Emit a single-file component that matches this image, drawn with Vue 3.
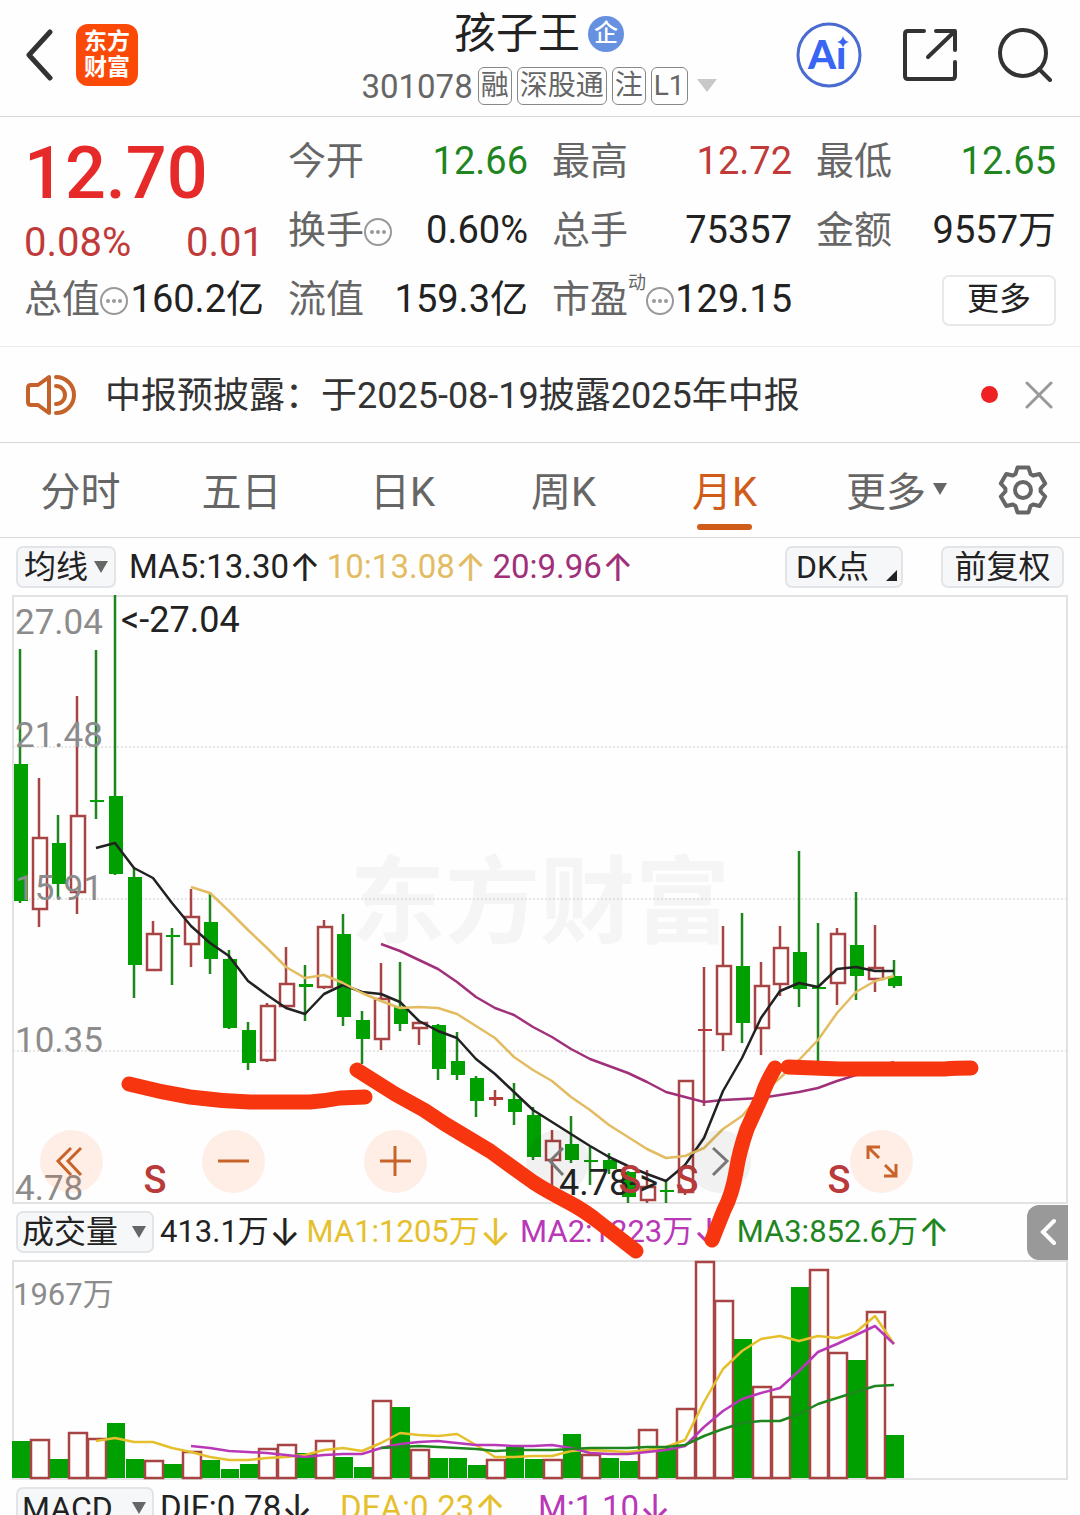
<template>
  <div class="stock-page">
    <header class="top-bar">
      <div class="top-left">
        <button class="icon-btn" aria-label="返回">
          <svg width="28" height="56" viewBox="4 0 28 56">
            <path d="M28 5 L7 28 L28 51" class="ico-dark thick" />
          </svg>
        </button>
        <div class="logo"><span>东方</span><span>财富</span></div>
      </div>

      <div class="title">
        <h1>孩子王<span class="badge">企</span></h1>
        <div class="code-line">
          <span class="code">301078</span>
          <span v-for="tag in tags" :key="tag" class="tag">{{ tag }}</span>
          <svg class="caret" width="20" height="14" viewBox="0 0 20 14"><path d="M0 0 H20 L10 13 Z" fill="#c8c8c8" /></svg>
        </div>
      </div>

      <div class="top-right">
        <button class="icon-btn" aria-label="Ai">
          <svg width="66" height="66" viewBox="0 0 66 66">
            <circle cx="33" cy="33" r="31" fill="#fff" stroke="#4a6bd0" stroke-width="3" />
            <text x="12" y="47" class="ai-text">Ai</text>
            <rect x="40" y="13" width="14" height="13" fill="#fff" />
            <path d="M47 14 Q48 19 53 20 Q48 21 47 26 Q46 21 41 20 Q46 19 47 14 Z" fill="#3866f2" />
          </svg>
        </button>
        <button class="icon-btn" aria-label="分享">
          <svg width="54" height="54" viewBox="0 0 54 54">
            <path d="M21 3 H5 Q2 3 2 6 V48 Q2 51 5 51 H49 Q52 51 52 48 V34 M33 3 H52 V22 M51 4 L25 29" class="ico-dark" />
          </svg>
        </button>
        <button class="icon-btn" aria-label="搜索">
          <svg width="54" height="54" viewBox="0 0 54 54">
            <circle cx="25" cy="25" r="23" class="ico-dark" />
            <path d="M41 41 L52 52" class="ico-dark" />
          </svg>
        </button>
      </div>
    </header>

    <section class="quote">
      <div class="price-box">
        <div class="price">12.70</div>
        <div class="change"><span>0.08%</span><span>0.01</span></div>
      </div>
      <div v-for="q in quotes" :key="q.label" class="cell">
        <span class="label">{{ q.label }}</span>
        <sup v-if="q.sup">{{ q.sup }}</sup>
        <svg v-if="q.tip" class="tip" width="28" height="28" viewBox="0 0 28 28">
          <circle cx="14" cy="14" r="13" fill="none" stroke="#999" stroke-width="2" />
          <circle cx="8" cy="14" r="2" fill="#999" />
          <circle cx="14" cy="14" r="2" fill="#999" />
          <circle cx="20" cy="14" r="2" fill="#999" />
        </svg>
        <span class="value" :class="q.color">{{ q.value }}</span>
      </div>
      <div class="cell more-cell"><button class="more-btn">更多</button></div>
    </section>

    <section class="notice">
      <svg width="50" height="42" viewBox="0 0 50 42" class="ico-orange">
        <path d="M23 3 V39 L12 31 H5 Q2 31 2 28 V14 Q2 11 5 11 H12 Z" />
        <path d="M30 3 A18 18 0 0 1 30 39" />
        <path d="M30 12 A9 9 0 0 1 30 30" />
      </svg>
      <a href="#" class="notice-text">中报预披露：于2025-08-19披露2025年中报</a>
      <span class="dot"></span>
      <button class="icon-btn" aria-label="关闭">
        <svg width="28" height="28" viewBox="0 0 28 28"><path d="M2 2 L26 26 M26 2 L2 26" stroke="#999" stroke-width="3" stroke-linecap="round" /></svg>
      </button>
    </section>

    <nav class="tabs">
      <button v-for="t in tabs" :key="t" class="tab" :class="{ active: t === current }" @click="current = t">{{ t }}</button>
      <button class="tab tab-more">更多<svg width="14" height="12" viewBox="0 0 14 12"><path d="M0 0 H14 L7 12 Z" fill="#666" /></svg></button>
      <button class="icon-btn" aria-label="设置">
        <svg width="50" height="50" viewBox="-25 -25 50 50" class="gear">
          <path :d="gear" />
          <circle r="8" />
        </svg>
      </button>
    </nav>

    <main class="charts">
      <div class="ma-row">
        <button class="chip">均线<svg width="14" height="12" viewBox="0 0 14 12"><path d="M0 0 H14 L7 12 Z" fill="#666" /></svg></button>
        <span class="ma">MA5:13.30<i>↑</i></span>
        <span class="ma gold">10:13.08<i>↑</i></span>
        <span class="ma purple">20:9.96<i>↑</i></span>
        <button class="chip dk">DK点<svg width="11" height="11" viewBox="0 0 11 11"><path d="M11 0 V11 H0 Z" fill="#222" /></svg></button>
        <button class="chip fq">前复权</button>
      </div>

      <div class="kline">
        <svg viewBox="0 595 1080 609" class="chart">
          <text x="350" y="936" class="watermark">东方财富</text>
          <path v-for="y in [747, 899, 1051]" :key="y" :d="`M13 ${y} H1067`" class="grid-line" />
          <rect x="13" y="596" width="1054" height="607" class="frame" />
          <g v-for="(c, i) in candles" :key="i" :class="c[0] === 'g' ? 'down' : 'up'">
            <path :d="`M${cx(i)} ${c[1]} V${c[2]} M${cx(i)} ${c[3]} V${c[4]}`" />
            <rect :x="cx(i) - 6" :y="c[2]" width="14" :height="c[3] - c[2]" :class="{ flat: c[3] - c[2] < 4 }" />
          </g>
          <polyline :points="line(ma20, 19)" stroke="#a0307a" class="ma-line" />
          <polyline :points="line(ma5, 4)" stroke="#222" class="ma-line" />
          <polyline :points="line(ma10, 9)" stroke="#e3bc62" class="ma-line" />
          <text v-for="a in axis" :key="a[0]" x="15" :y="a[1]" class="axis">{{ a[0] }}</text>
          <text x="121" y="632" class="mark">&lt;-27.04</text>
          <text x="559" y="1195" class="mark">4.78-&gt;</text>
          <text v-for="x in [155, 630, 687, 839]" :key="x" :x="x" y="1193" class="sell">S</text>
        </svg>
        <div class="tools">
          <button class="tool" aria-label="最左">
            <svg viewBox="0 0 63 63"><path d="M31 18 L18 31 L31 45 M41 18 L28 31 L41 45" /></svg>
          </button>
          <button class="tool" aria-label="缩小">
            <svg viewBox="0 0 63 63"><path d="M16 31 H47" /></svg>
          </button>
          <button class="tool" aria-label="放大">
            <svg viewBox="0 0 63 63"><path d="M16 31 H47 M31 16 V46" /></svg>
          </button>
          <button class="tool gray" aria-label="左移">
            <svg viewBox="0 0 63 63"><path d="M37 18 L24 31 L37 45" /></svg>
          </button>
          <button class="tool gray" aria-label="右移">
            <svg viewBox="0 0 63 63"><path d="M25 18 L39 31 L25 45" /></svg>
          </button>
          <button class="tool" aria-label="全屏">
            <svg viewBox="0 0 63 63"><path d="M30 17 H18 V29 M18 17 L29 28 M46 34 V46 H34 M46 46 L35 35" /></svg>
          </button>
        </div>
      </div>

      <div class="sub-row">
        <button class="chip">成交量<svg width="14" height="12" viewBox="0 0 14 12"><path d="M0 0 H14 L7 12 Z" fill="#666" /></svg></button>
        <span class="ind">413.1万<i>↓</i></span>
        <span class="ind yellow">MA1:1205万<i>↓</i></span>
        <span class="ind violet">MA2:1223万<i>↓</i></span>
        <span class="ind green">MA3:852.6万<i>↑</i></span>
        <button class="side-btn" aria-label="展开">
          <svg width="16" height="28" viewBox="0 0 16 28"><path d="M14 3 L3 14 L14 25" /></svg>
        </button>
      </div>

      <svg viewBox="0 1260 1080 220" class="chart">
        <rect x="13" y="1261" width="1054" height="218" class="frame" />
        <text x="13" y="1305" class="axis small">1967万</text>
        <g v-for="(v, i) in volumes" :key="i" :class="v[0] === 'g' ? 'down' : 'up'">
          <rect :x="12 + i * 19" :y="v[1]" width="18" :height="1478 - v[1]" />
        </g>
        <polyline :points="line(vol5, 4)" stroke="#e6c02c" class="ma-line" />
        <polyline :points="line(vol10, 9)" stroke="#b838b8" class="ma-line" />
        <polyline :points="line(vol20, 19)" stroke="#1f861f" class="ma-line" />
      </svg>

      <div class="sub-row macd">
        <button class="chip">MACD<svg width="14" height="12" viewBox="0 0 14 12"><path d="M0 0 H14 L7 12 Z" fill="#666" /></svg></button>
        <span class="ind">DIF:0.78<i>↓</i></span>
        <span class="ind yellow">DEA:0.23<i>↑</i></span>
        <span class="ind violet">M:1.10<i>↓</i></span>
      </div>

      <!-- 手绘标注 -->
      <svg viewBox="0 538 1080 977" class="drawing">
        <path d="M129 1084 Q160 1092 190 1097 Q220 1101 250 1102 H310 Q325 1101 340 1098 L365 1097" />
        <path d="M357 1070 L395 1094 L424 1110 L445 1124 L490 1151 L533 1182 Q545 1190 570 1203 Q585 1211 600 1223 L636 1251" />
        <path d="M775 1068 Q765 1085 762 1096 L747 1129 Q739 1152 736 1172 Q732 1195 724 1210 L712 1240" />
        <path d="M788 1067 L840 1069 H945 Q955 1068 971 1068" />
      </svg>
    </main>
  </div>
</template>

<script setup>
import { ref } from 'vue'

const tags = ['融', '深股通', '注', 'L1']
const tabs = ['分时', '五日', '日K', '周K', '月K']
const current = ref('月K')

const quotes = [
  { label: '今开', value: '12.66', color: 'green' },
  { label: '最高', value: '12.72', color: 'red' },
  { label: '最低', value: '12.65', color: 'green' },
  { label: '换手', value: '0.60%', tip: true },
  { label: '总手', value: '75357' },
  { label: '金额', value: '9557万' },
  { label: '总值', value: '160.2亿', tip: true },
  { label: '流值', value: '159.3亿' },
  { label: '市盈', value: '129.15', sup: '动', tip: true },
]

const gear = 'M-7.5 -16 L-5.5 -22.5 H5.5 L7.5 -16 L10.1 -14.5 L16.7 -16 L22.2 -6.5 L17.6 -1.5 V1.5 L22.2 6.5 L16.7 16 L10.1 14.5 L7.5 16 L5.5 22.5 H-5.5 L-7.5 16 L-10.1 14.5 L-16.7 16 L-22.2 6.5 L-17.6 1.5 V-1.5 L-22.2 -6.5 L-16.7 -16 L-10.1 -14.5 Z'

const axis = [['27.04', 634], ['21.48', 747], ['15.91', 900], ['10.35', 1052], ['4.78', 1200]]

// [颜色, 最高, 实体上沿, 实体下沿, 最低]
const candles = [
  ['g', 649, 764, 901, 903], ['r', 778, 838, 909, 927], ['g', 815, 843, 884, 898],
  ['r', 696, 816, 892, 914], ['g', 650, 800, 802, 819], ['g', 595, 796, 874, 875],
  ['g', 868, 877, 965, 998], ['r', 921, 934, 970, 971], ['g', 928, 935, 937, 985],
  ['r', 889, 917, 944, 967], ['g', 892, 922, 959, 974], ['g', 950, 959, 1028, 1029],
  ['g', 1022, 1030, 1063, 1070], ['r', 1003, 1006, 1060, 1062], ['r', 947, 984, 1006, 1007],
  ['g', 965, 984, 987, 1021], ['r', 920, 927, 987, 989], ['g', 914, 934, 1017, 1026],
  ['g', 1011, 1020, 1039, 1064], ['r', 963, 999, 1039, 1050], ['g', 962, 1007, 1024, 1031],
  ['r', 1022, 1023, 1028, 1045], ['g', 1024, 1025, 1069, 1080], ['g', 1032, 1061, 1075, 1080],
  ['g', 1076, 1078, 1101, 1117], ['r', 1090, 1097, 1100, 1106], ['g', 1083, 1099, 1112, 1125],
  ['g', 1107, 1115, 1157, 1160], ['r', 1130, 1141, 1160, 1187], ['g', 1116, 1144, 1160, 1163],
  ['g', 1147, 1160, 1162, 1185], ['g', 1153, 1160, 1169, 1174], ['g', 1171, 1172, 1197, 1203],
  ['r', 1170, 1187, 1200, 1203], ['g', 1180, 1190, 1192, 1203], ['r', 1080, 1081, 1192, 1195],
  ['r', 967, 1029, 1031, 1106], ['r', 926, 966, 1034, 1051], ['g', 913, 966, 1023, 1043],
  ['r', 962, 986, 1028, 1055], ['r', 926, 948, 984, 996], ['g', 851, 952, 989, 1007],
  ['g', 923, 987, 989, 1062], ['r', 928, 934, 983, 1005], ['g', 892, 945, 976, 1000],
  ['r', 925, 968, 979, 992], ['g', 960, 976, 986, 988],
]

const ma5 = [848, 843, 868, 878, 903, 926, 943, 956, 981, 995, 1008, 1014, 994, 985, 992, 994, 1002, 1021, 1031, 1038, 1059, 1074, 1092, 1110, 1122, 1134, 1146, 1157, 1166, 1174, 1181, 1165, 1138, 1091, 1058, 1018, 991, 983, 987, 969, 967, 971, 971]
const ma10 = [887, 893, 911, 930, 948, 967, 978, 975, 983, 993, 1001, 1008, 1007, 1008, 1014, 1026, 1038, 1057, 1070, 1081, 1097, 1110, 1125, 1137, 1149, 1158, 1156, 1148, 1129, 1116, 1094, 1078, 1060, 1040, 1013, 992, 981, 976]
const ma20 = [944, 951, 960, 969, 982, 997, 1008, 1015, 1027, 1037, 1049, 1059, 1066, 1073, 1082, 1092, 1097, 1102, 1100, 1099, 1098, 1095, 1092, 1088, 1081, 1075, 1068, 1062]

const volumes = [
  ['g', 1441], ['r', 1440], ['g', 1459], ['r', 1433], ['r', 1439], ['g', 1423], ['g', 1459], ['r', 1461],
  ['g', 1464], ['r', 1452], ['g', 1460], ['g', 1469], ['g', 1464], ['r', 1449], ['r', 1445], ['g', 1453],
  ['r', 1441], ['g', 1457], ['g', 1467], ['r', 1401], ['g', 1407], ['r', 1450], ['g', 1458], ['g', 1458],
  ['g', 1465], ['r', 1460], ['g', 1447], ['g', 1459], ['r', 1460], ['g', 1434], ['r', 1455], ['g', 1458],
  ['g', 1461], ['r', 1430], ['g', 1448], ['r', 1409], ['r', 1262], ['r', 1301], ['g', 1339], ['r', 1387],
  ['r', 1397], ['g', 1287], ['r', 1270], ['r', 1353], ['g', 1360], ['r', 1312], ['g', 1435],
]
const vol5 = [1441, 1438, 1442, 1442, 1448, 1452, 1457, 1460, 1460, 1458, 1457, 1455, 1450, 1448, 1451, 1443, 1433, 1435, 1436, 1434, 1445, 1457, 1457, 1456, 1456, 1451, 1450, 1451, 1452, 1450, 1447, 1440, 1402, 1369, 1351, 1339, 1336, 1341, 1336, 1338, 1332, 1316, 1344]
const vol10 = [1446, 1448, 1451, 1452, 1453, 1455, 1457, 1455, 1454, 1454, 1448, 1444, 1442, 1441, 1443, 1445, 1445, 1446, 1446, 1445, 1448, 1453, 1454, 1454, 1452, 1450, 1446, 1427, 1411, 1399, 1393, 1388, 1371, 1352, 1344, 1335, 1326, 1344]
const vol20 = [1448, 1447, 1446, 1447, 1448, 1449, 1451, 1450, 1450, 1450, 1449, 1448, 1448, 1448, 1447, 1447, 1445, 1436, 1429, 1423, 1421, 1421, 1414, 1404, 1398, 1392, 1386, 1385]

const cx = (i) => 20 + i * 19

const line = (list, start) => list.map((y, i) => `${cx(i + start)},${y}`).join(' ')
</script>

<style>
body {
  background: #fff;
}
</style>

<style scoped>
.stock-page {
  height: 100vh;
  overflow: hidden;
  background: #fefefe;
  color: #222;
  font-family: Roboto, "Noto Sans CJK SC", sans-serif;
  white-space: nowrap;
}

button {
  font-family: inherit;
  color: inherit;
  cursor: pointer;
}

.icon-btn {
  display: flex;
  align-items: center;
  justify-content: center;
  padding: 0;
  border: none;
  background: none;
}

.ico-dark {
  fill: none;
  stroke: #333;
  stroke-width: 4;
  stroke-linecap: round;
  stroke-linejoin: round;
}
.ico-dark.thick {
  stroke-width: 5;
}

.top-bar {
  display: grid;
  grid-template-columns: 1fr auto 1fr;
  height: 116px;
  padding: 0 28px 0 26px;
  border-bottom: 1px solid #d8d8d8;
}

.top-left,
.top-right {
  display: flex;
  align-items: center;
  height: 110px;
}
.top-left {
  gap: 22px;
}
.top-right {
  justify-content: flex-end;
  gap: 41px;
}

.logo {
  display: flex;
  flex-direction: column;
  justify-content: center;
  align-items: center;
  width: 62px;
  height: 62px;
  border-radius: 12px;
  background: #fb4a08;
  color: #fff;
  font-size: 23px;
  font-weight: 700;
  line-height: 26px;
}

.title {
  display: flex;
  flex-direction: column;
  align-items: center;
}
.title h1 {
  display: flex;
  align-items: center;
  gap: 8px;
  margin: 8px 0 0;
  font-size: 42px;
  font-weight: 400;
  line-height: 52px;
}
.badge {
  width: 36px;
  height: 36px;
  border-radius: 50%;
  background: #6690e0;
  color: #fff;
  font-size: 24px;
  font-weight: 500;
  line-height: 34px;
  text-align: center;
}

.code-line {
  display: flex;
  align-items: center;
  gap: 5px;
  height: 52px;
  color: #666;
}
.code {
  font-size: 33px;
}
.tag {
  height: 36px;
  padding: 0 2px;
  border: 1px solid #888;
  border-radius: 6px;
  font-size: 28px;
  line-height: 36px;
}
.caret {
  margin-left: 4px;
}

.ai-text {
  fill: #3866f2;
  font-family: Lato, sans-serif;
  font-size: 40px;
  font-weight: 900;
}

.quote {
  display: grid;
  grid-template-columns: repeat(4, 1fr);
  grid-template-rows: repeat(3, 69px);
  column-gap: 24px;
  padding: 11px 24px;
  border-bottom: 1px solid #ebebeb;
}
.price-box {
  grid-row: span 2;
  color: #e62a2a;
}
.price {
  font-size: 72px;
  font-weight: 500;
  line-height: 92px;
}
.change {
  display: flex;
  justify-content: space-between;
  color: #c03a3a;
  font-size: 40px;
  line-height: 46px;
}
.cell {
  display: flex;
  align-items: baseline;
  min-width: 0;
  font-size: 38px;
  line-height: 66px;
}
.label {
  color: #666;
}
.cell sup {
  align-self: flex-start;
  margin-top: 8px;
  color: #666;
  font-size: 18px;
  line-height: 18px;
}
.tip {
  flex: none;
  align-self: center;
}
.value {
  margin-left: auto;
}
.red {
  color: #c03a3a;
}
.green {
  color: #1f861f;
}
.more-cell {
  align-items: center;
}
.more-btn {
  width: 114px;
  height: 51px;
  margin-left: auto;
  padding: 0 0 3px;
  border: 2px solid #e6e8ea;
  border-radius: 7px;
  background: #fff;
  font-size: 32px;
  line-height: 44px;
}

.notice {
  display: flex;
  align-items: center;
  height: 95px;
  padding: 0 27px 0 26px;
  border-bottom: 1px solid #d8d8d8;
}
.ico-orange {
  fill: none;
  stroke: #c4622a;
  stroke-width: 4;
  stroke-linecap: round;
  stroke-linejoin: round;
}
.notice-text {
  flex: 1;
  margin-left: 29px;
  padding-bottom: 5px;
  color: #333;
  font-size: 36px;
  text-decoration: none;
}
.dot {
  width: 17px;
  height: 17px;
  margin-right: 27px;
  border-radius: 50%;
  background: #ee2222;
}

.tabs {
  display: grid;
  grid-template-columns: repeat(6, 161fr) 114fr;
  height: 94px;
  border-bottom: 1px solid #d8d8d8;
}
.tab {
  position: relative;
  padding: 0 0 3px;
  border: none;
  background: none;
  color: #666;
  font-size: 40px;
}
.tab.active {
  color: #d05c1a;
}
.tab.active::after {
  content: "";
  position: absolute;
  left: 50%;
  bottom: 7px;
  width: 55px;
  height: 6px;
  margin-left: -28px;
  border-radius: 3px;
  background: #d05c1a;
}
.tab-more {
  display: flex;
  align-items: center;
  justify-content: center;
  gap: 7px;
  padding-left: 22px;
}
.gear {
  fill: none;
  stroke: #666;
  stroke-width: 4;
  stroke-linejoin: round;
}

.charts {
  position: relative;
}

.ma-row {
  display: flex;
  align-items: center;
  height: 57px;
  padding: 0 16px;
}
.chip {
  display: flex;
  align-items: center;
  justify-content: space-between;
  height: 42px;
  padding: 0 8px;
  border: 2px solid #e2e4e8;
  border-radius: 7px;
  background: #f6f7f9;
  font-size: 32px;
  line-height: 38px;
}
.ma-row .chip:first-child {
  width: 100px;
  padding: 0 6px;
  margin-right: 13px;
}
.ma {
  display: flex;
  align-items: center;
  margin-right: 6px;
  font-size: 33px;
}
i {
  font-family: Inter, sans-serif;
  font-size: 38px;
  font-style: normal;
  line-height: 40px;
}
.gold {
  color: #e3bc62;
}
.purple {
  color: #a0307a;
}
.ma-row .dk {
  width: 118px;
  margin-left: auto;
  padding: 0 4px 0 9px;
}
.dk svg {
  align-self: flex-end;
  margin-bottom: 5px;
}
.ma-row .fq {
  width: 123px;
  margin-left: 38px;
  justify-content: center;
}

.kline {
  position: relative;
}
.chart {
  display: block;
  width: 100%;
  overflow: visible;
}
.frame {
  fill: none;
  stroke: #e2e2e2;
  stroke-width: 2;
}
.grid-line {
  stroke: #ccc;
  stroke-dasharray: 2 2;
}
.watermark {
  fill: #f5f5f5;
  font-size: 95px;
  font-weight: 700;
}
.down path {
  stroke: #1f861f;
  stroke-width: 2.5;
}
.down rect {
  fill: #00a000;
}
.up path {
  stroke: #a84444;
  stroke-width: 2.5;
}
.up rect {
  fill: none;
  stroke: #a84444;
  stroke-width: 2.5;
}
.up .flat {
  fill: #b83a3a;
  stroke: none;
}
.ma-line {
  fill: none;
  stroke-width: 2.5;
  stroke-linejoin: round;
}
.axis {
  fill: #8c8c8c;
  font-size: 35px;
}
.axis.small {
  font-size: 31px;
}
.mark {
  fill: #222;
  font-size: 36px;
}
.sell {
  fill: #b83a3a;
  font-size: 38px;
  font-weight: 500;
  text-anchor: middle;
}

.tools {
  position: absolute;
  left: 40px;
  right: 167px;
  bottom: 11px;
  display: flex;
  justify-content: space-between;
}
.tool {
  width: 63px;
  height: 63px;
  padding: 0;
  border: none;
  border-radius: 50%;
  background: rgba(255, 96, 24, 0.1);
}
.tool svg {
  display: block;
  fill: none;
  stroke: #c8642a;
  stroke-width: 3;
}
.tool.gray {
  background: rgba(0, 0, 0, 0.05);
}
.tool.gray svg {
  stroke: #777;
}

.sub-row {
  display: grid;
  grid-template-columns: 138px 145fr 214fr 217fr 297fr 41fr;
  align-items: center;
  height: 56px;
  padding: 0 12px 0 16px;
}
.sub-row .chip {
  padding: 0 6px 0 4px;
}
.ind {
  display: flex;
  align-items: center;
  padding-left: 6px;
  font-size: 31px;
  line-height: 32px;
}
.yellow {
  color: #e6c02c;
}
.violet {
  color: #b838b8;
}
.side-btn {
  display: flex;
  align-items: center;
  justify-content: center;
  width: 41px;
  height: 55px;
  justify-self: end;
  padding: 0;
  border: none;
  border-radius: 12px 0 0 12px;
  background: #999;
}
.side-btn svg {
  fill: none;
  stroke: #fff;
  stroke-width: 4;
  stroke-linecap: round;
}
.macd {
  grid-template-columns: 138px 180fr 198fr 536fr;
}
.macd .ind {
  font-size: 33px;
}

.drawing {
  position: absolute;
  top: 0;
  left: 0;
  width: 100%;
  pointer-events: none;
  fill: none;
  stroke: #f7360f;
  stroke-width: 15;
  stroke-linecap: round;
  stroke-linejoin: round;
}
</style>
